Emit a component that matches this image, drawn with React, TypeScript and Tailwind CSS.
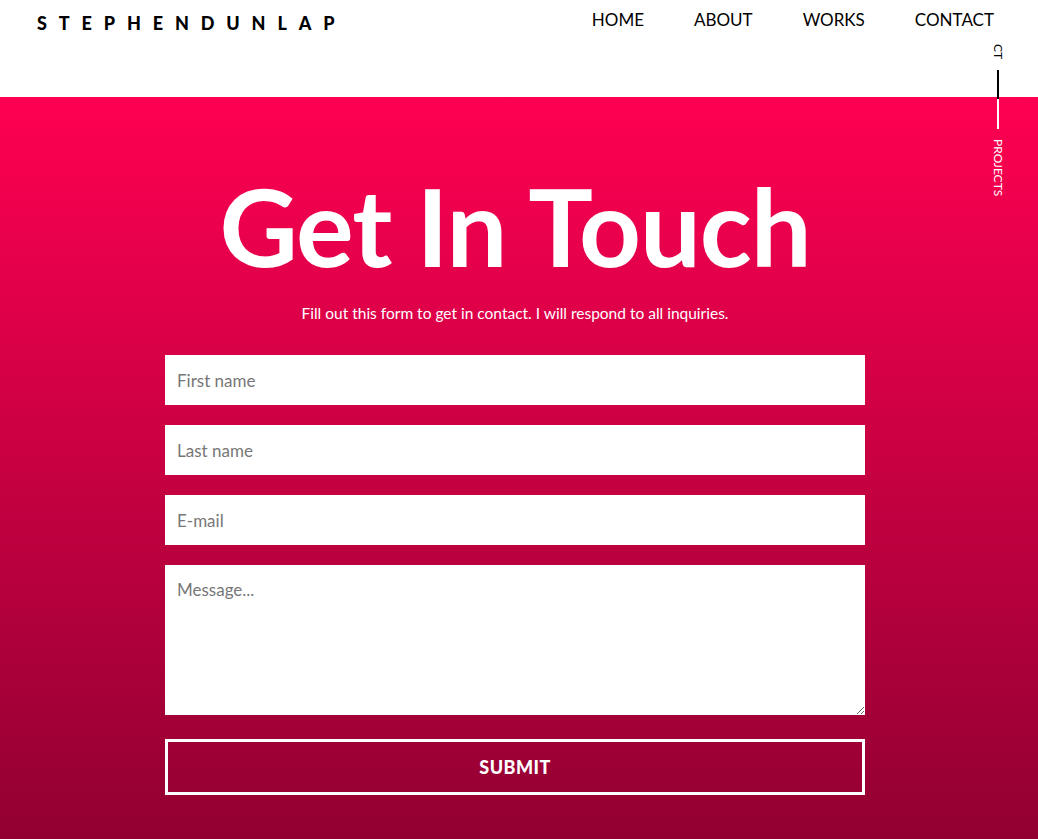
import React from 'react';

const navItems = ['HOME', 'ABOUT', 'WORKS', 'CONTACT'];

const App: React.FC = () => {
  return (
    <div className="relative min-h-screen bg-white font-['Lato','Liberation_Sans',sans-serif] overflow-hidden">
      <header className="h-[97px] bg-white flex items-start justify-between pl-[37px] pr-[44px]">
        <div className="mt-[10px] text-[18px] font-black tracking-[0.66em] text-black">STEPHENDUNLAP</div>
        <nav className="mt-[9px] flex gap-[50px] text-[17px] font-normal text-black">
          {navItems.map(item => (
            <a key={item} href="#" className="leading-[22px]">{item}</a>
          ))}
        </nav>
      </header>

      <section className="min-h-[742px] bg-gradient-to-b from-[#ff0052] to-[#920032] flex flex-col items-center pt-[73px] pb-[44px] pr-[8px]">
        <h1 className="text-[108px] leading-[110px] font-bold text-white tracking-[-0.01em]">Get In Touch</h1>
        <p className="mt-[22px] text-[15.5px] text-white">Fill out this form to get in contact. I will respond to all inquiries.</p>

        <form className="mt-[30px] w-[700px] flex flex-col gap-[20px]" onSubmit={e => e.preventDefault()}>
          <input type="text" placeholder="First name" className="h-[50px] bg-white px-3 text-[17px] text-gray-800 placeholder:text-[#777] outline-none" />
          <input type="text" placeholder="Last name" className="h-[50px] bg-white px-3 text-[17px] text-gray-800 placeholder:text-[#777] outline-none" />
          <input type="email" placeholder="E-mail" className="h-[50px] bg-white px-3 text-[17px] text-gray-800 placeholder:text-[#777] outline-none" />
          <textarea placeholder="Message..." className="h-[150px] bg-white px-3 pt-[12px] text-[17px] text-gray-800 placeholder:text-[#777] outline-none" />
          <button type="submit" className="mt-[4px] h-[56px] border-[3px] border-white text-white text-[18px] font-black tracking-wide">SUBMIT</button>
        </form>
      </section>

      {/* side indicator */}
      <div className="absolute right-[34px] top-[44px] flex flex-col items-center">
        <span className="[writing-mode:vertical-rl] text-[12px] leading-none text-black">CT</span>
        <div className="mt-[11px] w-[2px] h-[29px] bg-black" />
        <div className="w-[2px] h-[30px] bg-white" />
        <span className="mt-[10px] [writing-mode:vertical-rl] text-[12px] leading-none text-white">PROJECTS</span>
      </div>
    </div>
  );
};

export default App;
